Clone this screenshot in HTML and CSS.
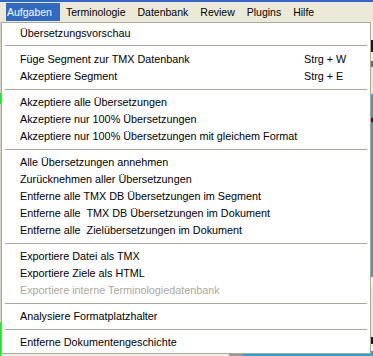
FILE: index.html
```html
<!DOCTYPE html>
<html lang="de">
<head>
<meta charset="utf-8">
<title>Aufgaben</title>
<link rel="stylesheet" href="styles.css">
</head>
<body>
<div class="app">
  <div class="titlebar"></div>
  <div class="menubar">
    <span class="mb-item mb-active">Aufgaben</span>
    <span class="mb-item">Terminologie</span>
    <span class="mb-item">Datenbank</span>
    <span class="mb-item">Review</span>
    <span class="mb-item">Plugins</span>
    <span class="mb-item">Hilfe</span>
  </div>
  <div class="workspace">
    <div class="ws-left">
      <div class="seg s-gray h71"></div>
      <div class="seg s-green h11"></div>
      <div class="seg s-gray h218"></div>
      <div class="seg s-green grow"></div>
    </div>
    <div class="ws-main">
      <div class="main-fill"></div>
      <div class="main-bottom">
        <div class="mb-light"></div>
        <div class="mb-dark"></div>
        <div class="mb-teal"></div>
      </div>
    </div>
    <div class="ws-right">
      <div class="seg s-light h18"></div>
      <div class="seg s-black h12"></div>
      <div class="seg s-light h9"></div>
      <div class="seg s-mid h6"></div>
      <div class="seg s-beige h27"></div>
      <div class="seg s-teal h24"></div>
      <div class="seg s-black h4"></div>
      <div class="seg s-teal h155"></div>
      <div class="seg s-light h9"></div>
      <div class="seg s-beige h51"></div>
      <div class="seg s-black h7"></div>
      <div class="seg s-light h7"></div>
      <div class="seg s-teal grow"></div>
    </div>
  </div>

  <div class="dropdown">
    <div class="item"><span class="label">Übersetzungsvorschau</span></div>
    <div class="sep sep-first"></div>
    <div class="item"><span class="label">Füge Segment zur TMX Datenbank</span><span class="key">Strg + W</span></div>
    <div class="item"><span class="label">Akzeptiere Segment</span><span class="key">Strg + E</span></div>
    <div class="sep"></div>
    <div class="item"><span class="label">Akzeptiere alle Übersetzungen</span></div>
    <div class="item"><span class="label">Akzeptiere nur 100% Übersetzungen</span></div>
    <div class="item"><span class="label">Akzeptiere nur 100% Übersetzungen mit gleichem Format</span></div>
    <div class="sep"></div>
    <div class="item"><span class="label">Alle Übersetzungen annehmen</span></div>
    <div class="item"><span class="label">Zurücknehmen aller Übersetzungen</span></div>
    <div class="item"><span class="label">Entferne alle TMX DB Übersetzungen im Segment</span></div>
    <div class="item"><span class="label">Entferne alle&nbsp; TMX DB Übersetzungen im Dokument</span></div>
    <div class="item"><span class="label">Entferne alle&nbsp; Zielübersetzungen im Dokument</span></div>
    <div class="sep"></div>
    <div class="item"><span class="label">Exportiere Datei als TMX</span></div>
    <div class="item"><span class="label">Exportiere Ziele als HTML</span></div>
    <div class="item disabled"><span class="label">Exportiere interne Terminologiedatenbank</span></div>
    <div class="sep"></div>
    <div class="item"><span class="label">Analysiere Formatplatzhalter</span></div>
    <div class="sep"></div>
    <div class="item"><span class="label">Entferne Dokumentengeschichte</span></div>
  </div>
</div>
</body>
</html>
```

FILE: styles.css
```css
* {
  box-sizing: border-box;
}

html, body {
  margin: 0;
  padding: 0;
}

body {
  width: 373px;
  height: 356px;
  overflow: hidden;
  font-family: "Liberation Sans", Arial, sans-serif;
  font-size: 10.8px;
  color: #000;
  background: #ece9d8;
}

.app {
  position: relative;
  width: 373px;
  height: 356px;
  display: flex;
  flex-direction: column;
}

.titlebar {
  height: 2px;
  background: #2f66d0;
}

.menubar {
  height: 20px;
  display: flex;
  align-items: flex-start;
  padding: 1px 0 0 0;
  background: #ece9d8;
  font-size: 10.5px;
}

.mb-item {
  height: 18px;
  line-height: 18px;
  padding: 0 6px;
  white-space: nowrap;
}

.mb-active {
  margin-left: 6px;
  padding: 0 8px 0 1px;
  background: #316ac5;
  color: #fff;
}

/* background application area (mostly hidden by the menu) */
.workspace {
  flex: 1;
  display: flex;
}

.ws-left {
  width: 1px;
  display: flex;
  flex-direction: column;
}

.ws-main {
  flex: 1;
  display: flex;
  flex-direction: column;
}

.main-fill {
  flex: 1;
  background: #f4f3ee;
}

.main-bottom {
  height: 3px;
  display: flex;
}

.mb-light {
  width: 228px;
  background: #f1efe6;
}

.mb-dark {
  width: 14px;
  background: #9c9a90;
}

.mb-teal {
  flex: 1;
  background: #2aa3cb;
}

.ws-right {
  width: 2px;
  display: flex;
  flex-direction: column;
}

.seg { flex: none; }
.grow { flex: 1; }
.h4 { height: 4px; }
.h6 { height: 6px; }
.h7 { height: 7px; }
.h9 { height: 9px; }
.h11 { height: 11px; }
.h12 { height: 12px; }
.h18 { height: 18px; }
.h24 { height: 24px; }
.h27 { height: 27px; }
.h51 { height: 51px; }
.h71 { height: 71px; }
.h155 { height: 155px; }
.h218 { height: 218px; }

.s-gray { background: #d6d3c6; }
.s-green { background: #22e622; }
.s-light { background: #f4f3ee; }
.s-black { background: #1a1a1a; }
.s-mid { background: #6a6a6a; }
.s-beige { background: #ece9d8; }
.s-teal { background: #2aa3cb; }

/* dropdown menu (overlay) */
.dropdown {
  position: absolute;
  top: 22px;
  left: 1px;
  width: 370px;
  border: 1px solid #aca899;
  background: #fff;
  padding: 2px 0;
  display: flex;
  flex-direction: column;
}

.item {
  height: 17px;
  line-height: 17px;
  display: grid;
  grid-template-columns: 284px auto;
  padding-left: 18px;
  white-space: nowrap;
}

.item.disabled {
  color: #aca899;
}

.sep {
  height: 1px;
  margin: 4px 3px;
  background: #aca899;
}

.sep-first {
  margin-top: 3px;
  margin-bottom: 5px;
}
```
